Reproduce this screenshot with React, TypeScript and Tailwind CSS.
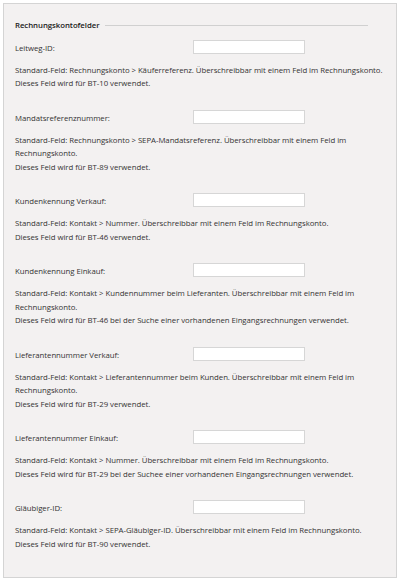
const fields: { label: string; lines: string[] }[] = [
  {
    label: "Leitweg-ID:",
    lines: [
      "Standard-Feld: Rechnungskonto > Käuferreferenz. Überschreibbar mit einem Feld im Rechnungskonto.",
      "Dieses Feld wird für BT-10 verwendet.",
    ],
  },
  {
    label: "Mandatsreferenznummer:",
    lines: [
      "Standard-Feld: Rechnungskonto > SEPA-Mandatsreferenz. Überschreibbar mit einem Feld im",
      "Rechnungskonto.",
      "Dieses Feld wird für BT-89 verwendet.",
    ],
  },
  {
    label: "Kundenkennung Verkauf:",
    lines: [
      "Standard-Feld: Kontakt > Nummer. Überschreibbar mit einem Feld im Rechnungskonto.",
      "Dieses Feld wird für BT-46 verwendet.",
    ],
  },
  {
    label: "Kundenkennung Einkauf:",
    lines: [
      "Standard-Feld: Kontakt > Kundennummer beim Lieferanten. Überschreibbar mit einem Feld im",
      "Rechnungskonto.",
      "Dieses Feld wird für BT-46 bei der Suche einer vorhandenen Eingangsrechnungen verwendet.",
    ],
  },
  {
    label: "Lieferantennummer Verkauf:",
    lines: [
      "Standard-Feld: Kontakt > Lieferantennummer beim Kunden. Überschreibbar mit einem Feld im",
      "Rechnungskonto.",
      "Dieses Feld wird für BT-29 verwendet.",
    ],
  },
  {
    label: "Lieferantennummer Einkauf:",
    lines: [
      "Standard-Feld: Kontakt > Nummer. Überschreibbar mit einem Feld im Rechnungskonto.",
      "Dieses Feld wird für BT-29 bei der Suchee einer vorhandenen Eingangsrechnungen verwendet.",
    ],
  },
  {
    label: "Gläubiger-ID:",
    lines: [
      "Standard-Feld: Kontakt > SEPA-Gläubiger-ID. Überschreibbar mit einem Feld im Rechnungskonto.",
      "Dieses Feld wird für BT-90 verwendet.",
    ],
  },
];

function FieldBlock({ label, lines }: { label: string; lines: string[] }) {
  return (
    <div className="mb-[19px]">
      <div className="flex items-end">
        <label className="w-[178px] shrink-0 leading-[12px]">{label}</label>
        <input
          type="text"
          className="h-[14px] w-[112px] border border-[#d6d6d6] bg-white outline-none"
        />
      </div>
      <div className="mt-[10px] leading-[13.5px]">
        {lines.map((line) => (
          <div key={line} className="whitespace-nowrap">
            {line}
          </div>
        ))}
      </div>
    </div>
  );
}

export default function App() {
  return (
    <div className="bg-white p-[3px] font-['Open_Sans','Noto_Sans',sans-serif] text-[7.8px] tracking-[-0.05px] text-[#333]">
      <div className="border border-[#d4d4d4] bg-[#f3f1f1] px-[11px] pt-[16px] pb-[7px]">
        <div className="mb-[8px] flex items-center gap-[5px] pr-[17px]">
          <span className="font-semibold text-[#1a1a1a]">Rechnungskontofelder</span>
          <div className="h-px flex-1 bg-[#d0d0d0]" />
        </div>
        {fields.map((f) => (
          <FieldBlock key={f.label} label={f.label} lines={f.lines} />
        ))}
      </div>
    </div>
  );
}
